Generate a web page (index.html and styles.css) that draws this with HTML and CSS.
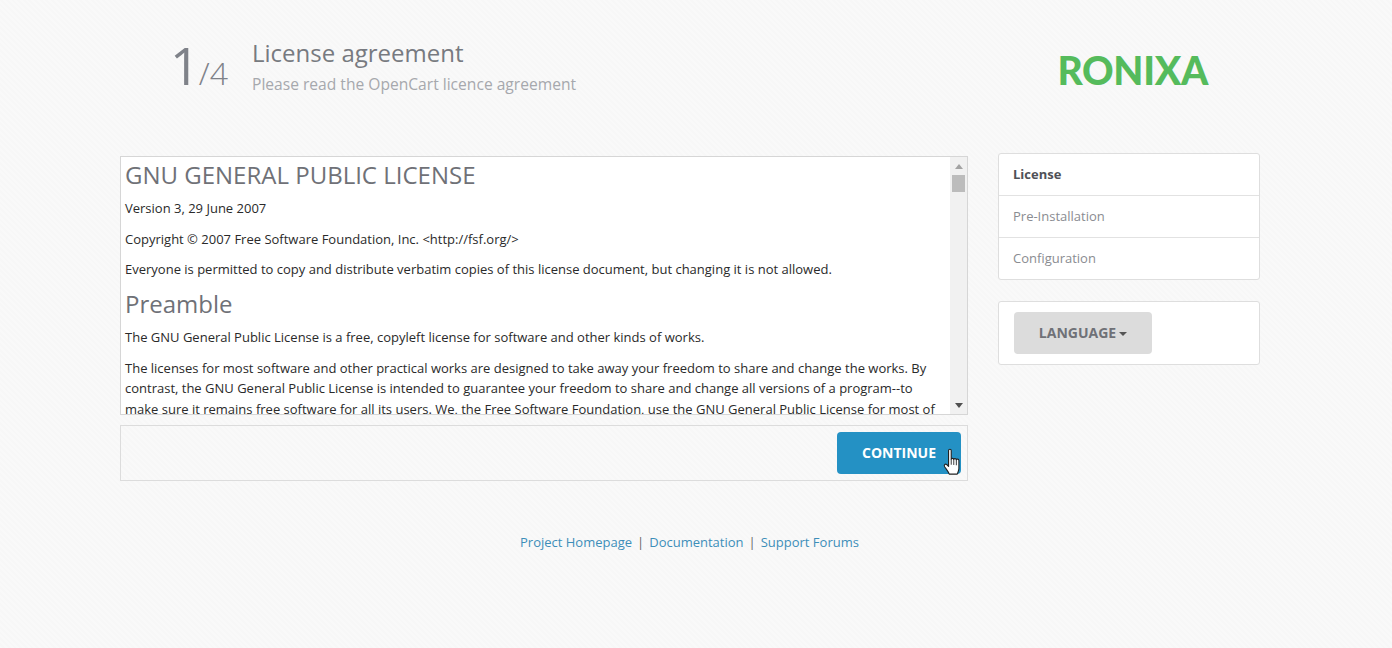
FILE: index.html
```html
<!DOCTYPE html>
<html lang="en">
<head>
    <meta charset="UTF-8">
    <title>Installation</title>
    <link rel="stylesheet" href="styles.css">
</head>
<body>

<div class="page">
    <header class="header">
        <div class="step"><span class="step-num">1</span><span class="step-total">/4</span></div>
        <div class="heading">
            <h1>License agreement</h1>
            <p>Please read the OpenCart licence agreement</p>
        </div>
        <div class="logo">RONIXA</div>
    </header>

    <div class="columns">
        <div class="main">
            <div class="license">
                <div class="license-text">
                    <h2>GNU GENERAL PUBLIC LICENSE</h2>
                    <p>Version 3, 29 June 2007</p>
                    <p>Copyright © 2007 Free Software Foundation, Inc. &lt;http://fsf.org/&gt;</p>
                    <p>Everyone is permitted to copy and distribute verbatim copies of this license document, but changing it is not allowed.</p>
                    <h3>Preamble</h3>
                    <p>The GNU General Public License is a free, copyleft license for software and other kinds of works.</p>
                    <p>The licenses for most software and other practical works are designed to take away your freedom to share and change the works. By contrast, the GNU General Public License is intended to guarantee your freedom to share and change all versions of a program--to make sure it remains free software for all its users. We, the Free Software Foundation, use the GNU General Public License for most of our software; it applies also to any other work released this way by its authors.</p>
                </div>
                <div class="scrollbar">
                    <span class="arrow-up"></span>
                    <span class="thumb"></span>
                    <span class="arrow-down"></span>
                </div>
            </div>
            <div class="actions">
                <button class="continue" type="button">CONTINUE
                    <svg class="cursor" width="20" height="29" viewBox="0 0 18 26">
                        <path d="M5 2.2c0-1.5 2.4-1.5 2.4 0V10c0-.9 2.3-1 2.3.2 0-.9 2.3-1 2.3.3 0-.8 2.3-.8 2.3.6v7.4c0 2-.9 3.2-1.5 5H5.6C4.8 21 3.600 19.800 1.500 16.800c-1-1.500.4-3 1.800-2L5 16.500z" fill="#fff" stroke="#222" stroke-width="1" stroke-linejoin="round"/>
                        <path d="M7.400 10v5M9.700 10.200v5M12 10.500v5" stroke="#222" stroke-width=".8" fill="none"/>
                    </svg>
                </button>
            </div>
        </div>

        <aside class="side">
            <ul class="steps">
                <li class="active">License</li>
                <li>Pre-Installation</li>
                <li>Configuration</li>
            </ul>
            <div class="lang-box">
                <button class="lang" type="button">LANGUAGE<span class="caret"></span></button>
            </div>
        </aside>
    </div>

    <footer class="footer">
        <a href="#">Project Homepage</a><span class="sep">|</span><a href="#">Documentation</a><span class="sep">|</span><a href="#">Support Forums</a>
    </footer>
</div>

</body>
</html>
```

FILE: styles.css
```css
* {
    box-sizing: border-box;
}
html, body {
    height: 100%;
}
body {
    margin: 0;
    background-color: #f8f8f8;
    background-image: repeating-linear-gradient(45deg, #f9f9f9 0, #f9f9f9 2px, #f7f7f7 2px, #f7f7f7 4px);
    font-family: "Open Sans", Arial, sans-serif;
    font-size: 13px;
    color: #333;
    overflow: hidden;
}
.page {
    width: 1140px;
    margin-left: 120px;
}
.header {
    display: flex;
    height: 153px;
    padding: 32px 52px 0 50px;
}
.step {
    width: 82px;
    color: #7f8289;
    line-height: 1;
    white-space: nowrap;
    padding-top: 7px;
}
.step-num {
    font-size: 52px;
    font-weight: 400;
}
.step-total {
    font-size: 32px;
    font-weight: 300;
    margin-left: -1px;
}
.heading {
    flex: 1;
}
.heading h1 {
    margin: 5px 0 0;
    font-size: 24px;
    line-height: 32px;
    font-weight: 400;
    color: #777a80;
}
.heading p {
    margin: 1px 0 0;
    font-size: 15.600px;
    line-height: 28px;
    color: #a6a8ad;
}
.logo {
    font-family: Lato, "Open Sans", sans-serif;
    font-size: 39px;
    font-weight: 900;
    line-height: 46px;
    letter-spacing: -.3px;
    color: #55bb5c;
    padding-top: 15px;
}
.columns {
    display: flex;
    align-items: flex-start;
    gap: 30px;
}
.main {
    width: 848px;
    padding-top: 3px;
}
.license {
    display: flex;
    height: 259px;
    border: 1px solid #d6d6d6;
    background: #fff;
}
.license-text {
    flex: 1;
    overflow: hidden;
    padding: 0 4px;
    font-size: 13px;
    line-height: 20.500px;
    color: #2a2a2a;
}
.license-text p {
    margin: 0 0 10px;
}
.license-text h2 {
    margin: 3px 0 8px;
    font-size: 24px;
    line-height: 30px;
    font-weight: 400;
    color: #6f7177;
}
.license-text h3 {
    margin: -1px 0 8.500px;
    font-size: 24px;
    line-height: 30px;
    font-weight: 400;
    color: #6f7177;
}
.scrollbar {
    width: 17px;
    flex: none;
    background: #f1f1f1;
    display: flex;
    flex-direction: column;
    align-items: center;
    padding: 7px 0 6px;
}
.thumb {
    width: 13px;
    height: 17px;
    margin-top: 6px;
    background: #bcbcbc;
}
.arrow-up, .arrow-down {
    width: 0;
    height: 0;
    border-left: 4px solid transparent;
    border-right: 4px solid transparent;
}
.arrow-up {
    border-bottom: 5px solid #a3a3a3;
}
.arrow-down {
    margin-top: auto;
    border-top: 5px solid #505050;
}
.actions {
    display: flex;
    justify-content: flex-end;
    height: 56px;
    margin-top: 10px;
    padding: 6px 6px 0 0;
    border: 1px solid #dcdcdc;
}
.continue {
    position: relative;
    width: 124px;
    height: 42px;
    border: none;
    border-radius: 4px;
    background-color: #2491c4;
    color: #fff;
    font-family: "Open Sans", Arial, sans-serif;
    font-size: 14px;
    font-weight: 700;
    padding: 0 0 2px;
}
.cursor {
    position: absolute;
    left: 106px;
    top: 16px;
}
.side {
    width: 262px;
}
.steps {
    list-style: none;
    margin: 0;
    padding: 0;
    background: #fff;
    border: 1px solid #dedede;
    border-radius: 3px;
}
.steps li {
    height: 42px;
    padding-left: 14px;
    line-height: 41px;
    font-size: 13px;
    color: #8a8c91;
    border-top: 1px solid #e2e2e2;
}
.steps li:first-child {
    height: 41px;
    border-top: none;
}
.steps li.active {
    font-weight: 700;
    color: #4f5157;
}
.lang-box {
    height: 64px;
    margin-top: 21px;
    padding: 10px 15px;
    background: #fff;
    border: 1px solid #dedede;
    border-radius: 3px;
}
.lang {
    width: 138px;
    height: 42px;
    border: none;
    border-radius: 4px;
    background-color: #dcdcdc;
    color: #6f7177;
    font-family: "Open Sans", Arial, sans-serif;
    font-size: 14px;
    font-weight: 700;
    padding: 0 0 2px;
}
.caret {
    display: inline-block;
    width: 0;
    height: 0;
    margin-left: 3px;
    vertical-align: middle;
    border-left: 4px solid transparent;
    border-right: 4px solid transparent;
    border-top: 4px solid #555;
}
.footer {
    margin-top: 50px;
    margin-left: 400px;
    font-size: 13px;
    line-height: 22px;
    color: #666;
}
.footer a {
    color: #3d8eb9;
    text-decoration: none;
}
.sep {
    margin: 0 5px;
}
```
